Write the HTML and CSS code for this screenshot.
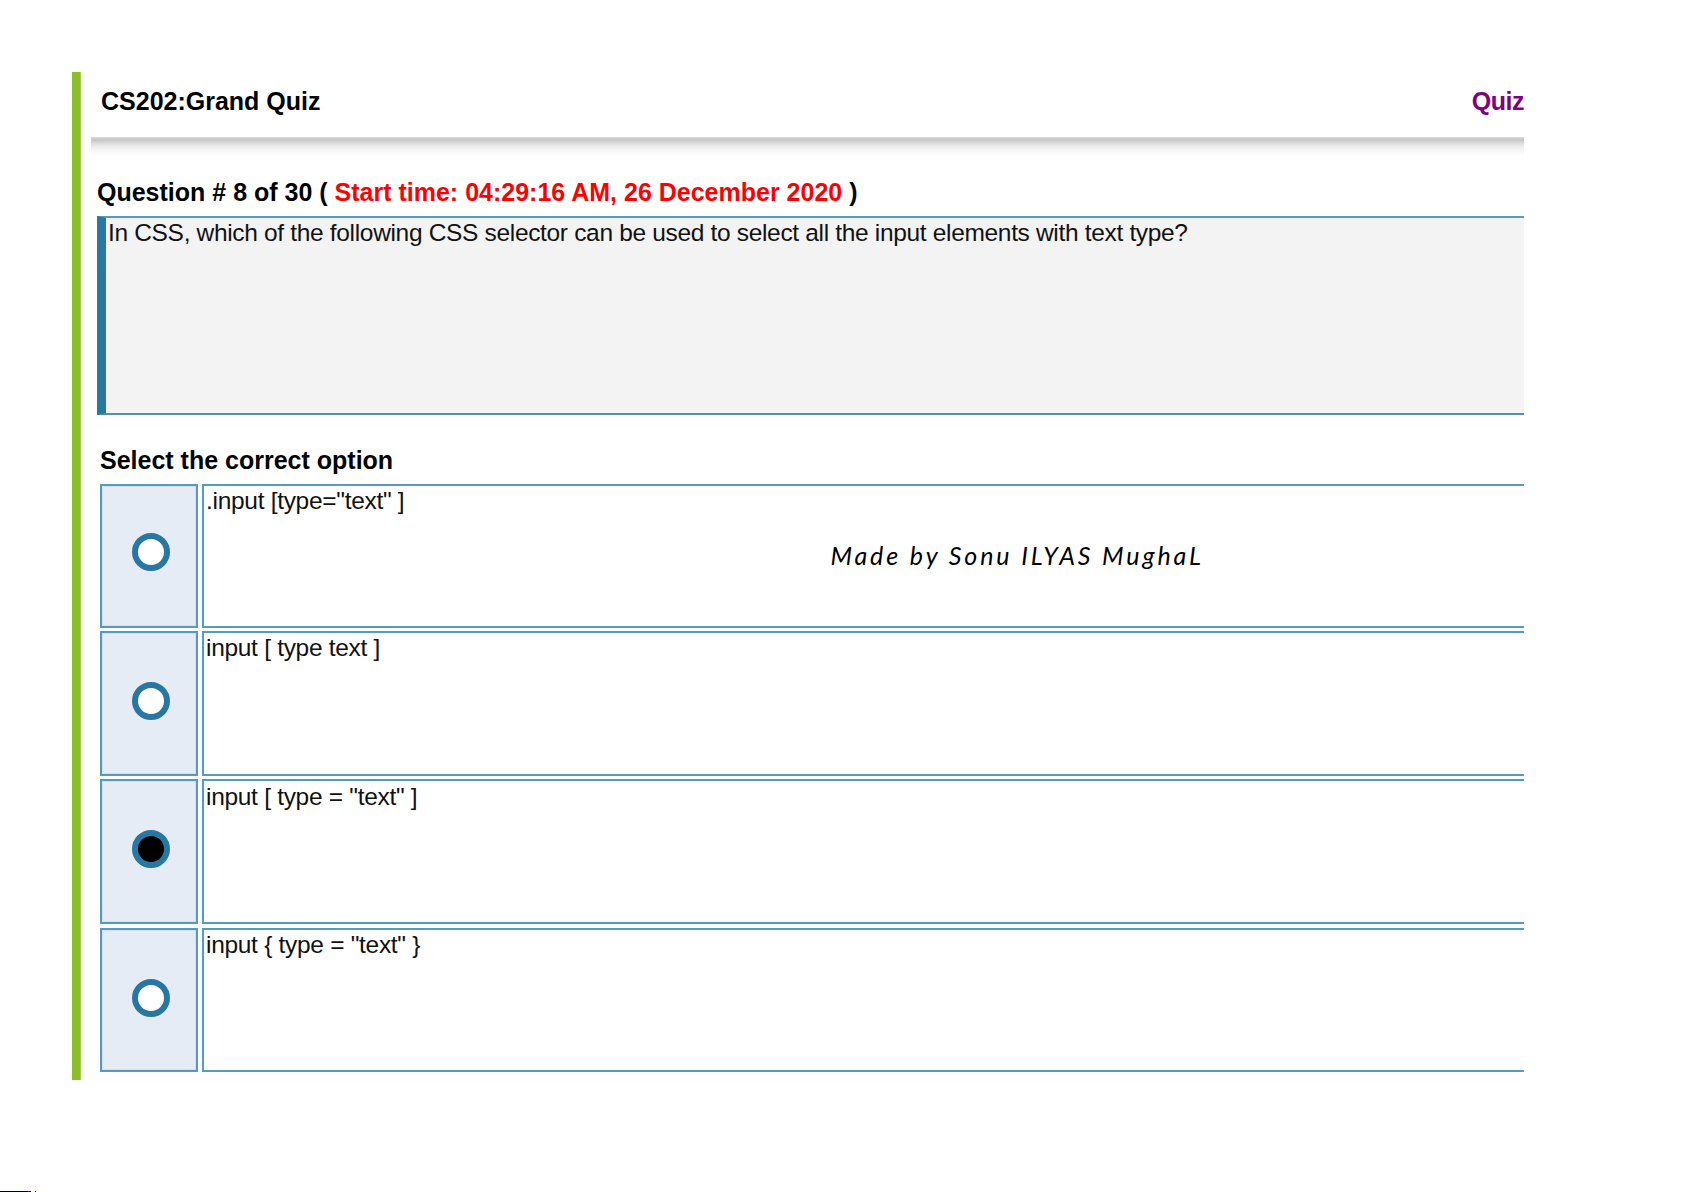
FILE: index.html
```
<!DOCTYPE html>
<html lang="en">
<head>
<meta charset="utf-8">
<title>CS202:Grand Quiz</title>
<link rel="stylesheet" href="styles.css">
</head>
<body>
<main class="quiz">
  <header class="quiz-header">
    <span>CS202:Grand Quiz</span>
    <span class="quiz-link">Quiz</span>
  </header>
  <div class="header-shadow"></div>
  <h1 class="question-title">Question # 8 of 30 ( <span class="start-time">Start time: 04:29:16 AM, 26 December 2020</span> )</h1>
  <section class="question">In CSS, which of the following CSS selector can be used to select all the input elements with text type?</section>
  <h2 class="options-title">Select the correct option</h2>
  <div class="options">
    <div class="pick"><i class="radio"></i></div>
    <div class="answer first"><span>.input [type="text" ]</span><span class="signature">Made by Sonu ILYAS MughaL</span></div>
    <div class="pick"><i class="radio"></i></div>
    <div class="answer">input [ type text ]</div>
    <div class="pick"><i class="radio checked"></i></div>
    <div class="answer low">input [ type = "text" ]</div>
    <div class="pick last"><i class="radio"></i></div>
    <div class="answer last">input { type = "text" }</div>
  </div>
</main>
<footer class="edge"></footer>
</body>
</html>
```
FILE: styles.css
```
* { box-sizing: border-box; }
body {
  margin: 0;
  height: 1192px;
  padding-top: 72px;
  display: flex;
  flex-direction: column;
  justify-content: space-between;
  overflow: hidden;
  background: #fff;
  color: #111;
  font: 24.5px/28px "Liberation Sans", Arial, sans-serif;
}
.quiz {
  width: 1452px;
  height: 1008px;
  margin-left: 72px;
  padding-left: 10px;
  background: linear-gradient(90deg, #8bbf26 8px, #a5ce57 8px, #a5ce57 9px, transparent 9px);
  overflow: hidden;
}
.quiz-header {
  height: 65px;
  padding: 15px 0 0 19px;
  display: flex;
  justify-content: space-between;
  font-weight: bold;
  font-size: 25px;
  color: #000;
}
.quiz-link { color: purple; letter-spacing: -0.5px; }
.header-shadow {
  height: 20px;
  margin-left: 9px;
  background: linear-gradient(#dedede, #c8c8c8 2px, #cdcdcd 4px, #e6e6e6 8px, #f6f6f6 13px, #fff);
}
.question-title, .options-title { margin: 0; font-size: 25px; line-height: 28px; color: #000; white-space: nowrap; }
.question-title { padding: 21px 0 0 15px; height: 59px; }
.start-time { color: #f00; }
.question {
  height: 199px;
  margin-left: 15px;
  padding: 1px 0 0 2px;
  border: solid #2878a2;
  border-width: 2px 0 2px 9px;
  border-top-color: #5b9abb;
  border-bottom-color: #4f91b5;
  background: #f3f3f3;
  letter-spacing: -0.33px;
  white-space: nowrap;
}
.options-title { padding: 31px 0 0 18px; height: 69px; }
.options {
  margin-left: 18px;
  display: grid;
  grid-template-columns: 98px 1fr;
  grid-template-rows: 144px 145px 145px 145px;
  column-gap: 4px;
  row-gap: 3px;
}
.pick, .answer { border: 2px solid #559bc0; }
.pick {
  display: flex;
  justify-content: center;
  align-items: flex-end;
  padding: 0 0 54px 3px;
  background: #e6ecf6;
  box-shadow: inset 0 0 0 1px #d4e1ec;
}
.pick:first-child { padding-bottom: 55px; }
.answer { border-right: 0; padding: 1px 2px 0; letter-spacing: -0.3px; }
.low { padding-top: 2px; }
.last { margin-top: 1px; }
.pick.last { padding-bottom: 53px; }
.radio { width: 38px; height: 38px; border: 6px solid #2777a2; border-radius: 50%; background: #fff; }
.checked { background: #000; }
.first { display: flex; gap: 426px; align-items: flex-start; }
.signature {
  margin-top: 54px;
  color: #000;
  font: italic 400 25px/28px Lato, sans-serif;
  letter-spacing: 2.9px;
  white-space: nowrap;
}
.edge {
  width: 36px;
  height: 1px;
  background: linear-gradient(90deg, #000 28px, #c00 28px, #c00 29px, #00f 29px, #00f 31px, #fff 31px, #fff 34px, #ff0 34px, #ff0 35px, #000 35px);
}
```
